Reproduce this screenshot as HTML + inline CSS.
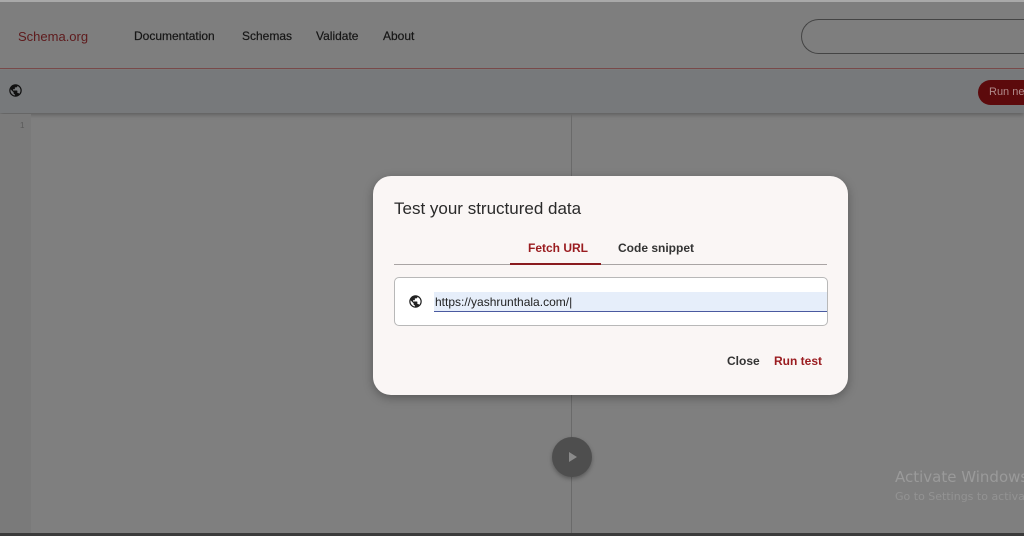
<!DOCTYPE html>
<html><head><meta charset="utf-8"><style>
*{box-sizing:border-box;margin:0;padding:0}
html,body{width:1024px;height:536px;overflow:hidden}
body{background:#7f7f7f;font-family:"Liberation Sans",sans-serif;position:relative}
#w{position:absolute;left:0;top:0;width:1024px;height:536px;overflow:hidden}
.top{position:absolute;left:0;top:0;width:1024px;height:2px;background:#a9a9a9}
.hdr{position:absolute;left:0;top:2px;width:1024px;height:67px;background:#7e7e7e;border-bottom:1px solid #7a4a4a}
.logo{position:absolute;left:18px;top:27px;font-size:13px;color:#5e1a1c}
.nav{position:absolute;top:27px;font-size:12px;color:#161616;-webkit-text-stroke:.2px #161616}
.search{position:absolute;left:801px;top:17px;width:223px;height:35px;border:1px solid #444;border-right:none;border-radius:18px 0 0 18px}
.tb{position:absolute;left:0;top:70px;width:1024px;height:43px;background:#77797b;box-shadow:0 2px 4px rgba(0,0,0,.25)}
.run{position:absolute;left:978px;top:80px;width:46px;height:25px;border-radius:13px 0 0 13px;background:#5c0a0c;color:#b08a8a;font-size:11px;padding:6px 0 0 11px;white-space:nowrap;overflow:hidden}
.gut{position:absolute;left:0;top:114px;width:31px;height:422px;background:#7a7a7a}
.ln{position:absolute;left:20px;top:121px;font-size:8px;color:#5a5a5a}
.vl{position:absolute;left:571px;top:114px;width:1px;height:422px;background:#6a6a6a}
.play{position:absolute;left:552px;top:437px;width:40px;height:40px;border-radius:50%;background:#4e4e4e;box-shadow:0 2px 4px rgba(0,0,0,.3)}
.play:after{content:"";position:absolute;left:17px;top:15px;border-left:8px solid #8a8a8a;border-top:5px solid transparent;border-bottom:5px solid transparent}
.bot{position:absolute;left:0;top:533px;width:1024px;height:3px;background:#3a3a3a}
.act{position:absolute;left:895px;top:468px;width:129px;overflow:hidden;color:#9a9a9a;font-family:"DejaVu Sans",sans-serif;font-size:15px;white-space:nowrap}
.act2{position:absolute;left:895px;top:490px;width:129px;overflow:hidden;color:#939393;font-family:"DejaVu Sans",sans-serif;font-size:11px;white-space:nowrap}
.dlg{position:absolute;left:373px;top:176px;width:475px;height:219px;background:#faf6f5;border-radius:18px;box-shadow:0 3px 10px rgba(0,0,0,.3)}
.ttl{position:absolute;left:21px;top:23px;font-size:17px;color:#2a2a2a}
.tabline{position:absolute;left:21px;top:88px;width:433px;height:1px;background:#a9a4a4}
.tabsel{position:absolute;left:137px;top:87px;width:91px;height:2px;background:#8a1b1f}
.tab1{position:absolute;left:155px;top:65px;font-size:12px;font-weight:bold;color:#9a1c20}
.tab2{position:absolute;left:245px;top:65px;font-size:12px;font-weight:bold;color:#333}
.inp{position:absolute;left:21px;top:101px;width:434px;height:49px;border:1px solid #b8b8b8;border-radius:5px;background:#fff;overflow:hidden}
.field{position:absolute;left:39px;top:14px;width:394px;height:20px;background:#e6eefa;border-bottom:1px solid #4a5aa0;font-size:12px;color:#222;padding:3px 0 0 1px}
.btn{position:absolute;top:178px;font-size:12px;font-weight:bold}
</style></head><body><div id="w">
<div class="top"></div>
<div class="hdr">
<div class="logo">Schema.org</div>
<div class="nav" style="left:134px">Documentation</div>
<div class="nav" style="left:242px">Schemas</div>
<div class="nav" style="left:316px">Validate</div>
<div class="nav" style="left:383px">About</div>
<div class="search"></div>
</div>
<div class="tb">
<svg style="position:absolute;left:8px;top:13px" width="15" height="15" viewBox="0 0 24 24"><path fill="#111" d="M12 2a10 10 0 1 0 0 20 10 10 0 0 0 0-20zm-1 17.9A8 8 0 0 1 4.2 10.2L9 15v1a2 2 0 0 0 2 2v1.9zm6.9-2.5A2 2 0 0 0 16 16h-1v-3a1 1 0 0 0-1-1H8v-2h2a1 1 0 0 0 1-1V7h2a2 2 0 0 0 2-2v-.4a8 8 0 0 1 2.9 12.8z"/></svg>
</div>
<div class="run">Run new</div>
<div class="gut"></div><div class="ln">1</div>
<div class="vl"></div>
<div class="play"></div>
<div class="act">Activate Windows</div>
<div class="act2">Go to Settings to activate Windows.</div>
<div class="bot"></div>
<div class="dlg">
<div class="ttl">Test your structured data</div>
<div class="tab1">Fetch URL</div>
<div class="tab2">Code snippet</div>
<div class="tabline"></div><div class="tabsel"></div>
<div class="inp">
<svg style="position:absolute;left:13px;top:16px" width="15" height="15" viewBox="0 0 24 24"><path fill="#222" d="M12 2a10 10 0 1 0 0 20 10 10 0 0 0 0-20zm-1 17.9A8 8 0 0 1 4.2 10.2L9 15v1a2 2 0 0 0 2 2v1.9zm6.9-2.5A2 2 0 0 0 16 16h-1v-3a1 1 0 0 0-1-1H8v-2h2a1 1 0 0 0 1-1V7h2a2 2 0 0 0 2-2v-.4a8 8 0 0 1 2.9 12.8z"/></svg>
<div class="field">https://yashrunthala.com/|</div>
</div>
<div class="btn" style="left:354px;color:#333">Close</div>
<div class="btn" style="left:401px;color:#9a1c20">Run test</div>
</div>
</div></body></html>
